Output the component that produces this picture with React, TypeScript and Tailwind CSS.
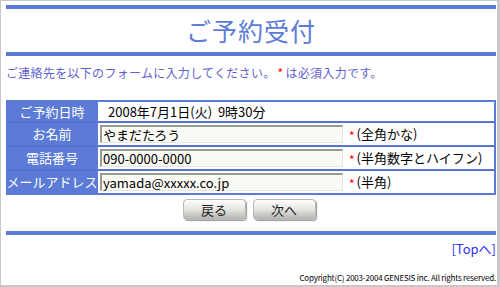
import React from 'react';

const jp = { fontFamily: '"Noto Sans CJK JP", "Liberation Sans", sans-serif' };

const Star = () => <span className="text-[#ff0000] mx-[2px]">*</span>;

const Field = ({ value }: { value: string }) => (
  <div className="w-[243px] h-[18px] bg-[#fbfbf6] border-t-2 border-l-2 border-[#9a9a96] border-r border-b border-r-[#e6e6e0] border-b-[#e6e6e0] pl-[1px] text-[13px] leading-[15px] text-black">
    {value}
  </div>
);

const rows = [
  { label: 'ご予約日時', h: 'h-[19px]' },
  { label: 'お名前', h: 'h-[23px]', value: 'やまだたろう', note: '(全角かな)' },
  { label: '電話番号', h: 'h-[23px]', value: '090-0000-0000', note: '(半角数字とハイフン)' },
  { label: 'メールアドレス', h: 'h-[23px]', value: 'yamada@xxxxx.co.jp', note: '(半角)' },
];

const App = () => {
  return (
    <div className="w-[500px] h-[287px] bg-white border border-[#c8c8c8] border-r-[3px] border-b-2 overflow-hidden" style={jp}>
      <div className="px-[5px] pr-[1px] pt-[4px]">
        <div className="h-[4px] bg-[#5b7bd6]" />
        <h1 className="h-[43px] flex items-center justify-center text-[25px] text-[#5b7bd6] tracking-[1px]">ご予約受付</h1>
        <div className="h-[4px] bg-[#5b7bd6]" />

        <p className="mt-[9px] text-[12px] leading-[16px] text-[#5f5fd0] tracking-[0.3px]">
          ご連絡先を以下のフォームに入力してください。<Star />は必須入力です。
        </p>

        <div className="mt-[19px] border-2 border-[#5b7bd6] bg-[#5b7bd6] flex flex-col gap-[1px]">
          {rows.map((r, i) => (
            <div key={r.label} className={`flex ${r.h} ${i > 0 ? 'border-t border-[#4f6fcb]' : ''}`}>
              <div className="w-[90px] flex items-center justify-center text-white text-[13px] whitespace-nowrap bg-[#5b7bd6] border-r-2 border-[#5b7bd6]">
                {r.label}
              </div>
              <div className="flex-1 bg-white flex items-center pl-[2px] text-[12px] text-black">
                {r.value === undefined ? (
                  <span className="pl-[8px] text-[13px]">2008年7月1日(火)&nbsp;&nbsp;9時30分</span>
                ) : (
                  <>
                    <Field value={r.value} />
                    <span className="ml-[4px] mt-[4px]"><Star /></span>
                    <span className="text-[13px]">{r.note}</span>
                  </>
                )}
              </div>
            </div>
          ))}
        </div>

        <div className="mt-[4px] flex justify-center gap-[7px] pr-[4px]">
          <button className="w-[63px] h-[21px] rounded-[4px] border border-[#b8b8b4] bg-gradient-to-b from-[#ffffff] via-[#e4e4e0] to-[#b4b4b0] text-[13px] text-[#222] shadow-[1px_1px_1px_#999]">戻る</button>
          <button className="w-[63px] h-[21px] rounded-[4px] border border-[#b8b8b4] bg-gradient-to-b from-[#ffffff] via-[#e4e4e0] to-[#b4b4b0] text-[13px] text-[#222] shadow-[1px_1px_1px_#999]">次へ</button>
        </div>

        <div className="mt-[11px] h-[4px] bg-[#5b7bd6]" />

        <div className="mt-[6px] flex justify-end text-[13px] leading-[16px] text-[#2f2ff0]">[Topへ]</div>

        <div className="mt-[16px] flex justify-end text-[8px] leading-[10px] text-black tracking-[-0.2px]">
          Copyright(C) 2003-2004 GENESIS inc. All rights reserved.
        </div>
      </div>
    </div>
  );
};

export default App;
